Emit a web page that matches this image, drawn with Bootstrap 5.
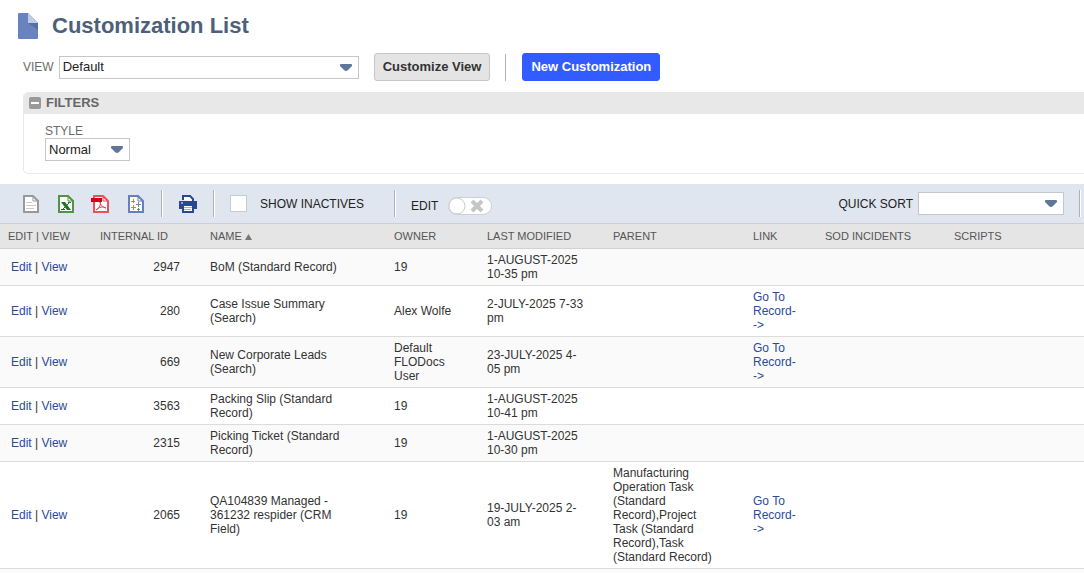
<!DOCTYPE html>
<html lang="en">
<head>
<meta charset="utf-8">
<meta name="viewport" content="width=device-width, initial-scale=1">
<title>Customization List</title>
<link href="https://cdn.jsdelivr.net/npm/bootstrap@5.3.0/dist/css/bootstrap.min.css" rel="stylesheet">
<style>
  body { font-family: "Liberation Sans", Arial, sans-serif; font-size: 12px; line-height: 14px; color: #333; background: #fff; }
  a { color: #2b4b96; text-decoration: none; }
  a:hover { text-decoration: underline; }
  .page-heading { padding: 11px 18px 0 17px; gap: 13px; }
  .page-heading h1 { font-size: 22px; line-height: 30px; font-weight: 700; color: #4d5f79; }
  .view-bar { padding: 12px 23px 0; gap: 15px; }
  .view-field { gap: 5px; }
  .field-label { color: #6b6b6b; }
  .ns-select { appearance: none; border: 1px solid #c4c7cb; border-radius: 0; height: 23px; padding: 0 24px 0 3px; font-size: 13px; line-height: 20px; color: #222;
    background: #fff url("data:image/svg+xml,%3Csvg xmlns='http://www.w3.org/2000/svg' width='12' height='7'%3E%3Cpath d='M1 0h10q1 0 1 1v1L8 6q-2 2-4 0L0 2V1q0-1 1-1z' fill='%23607799'/%3E%3C/svg%3E") no-repeat right 6px center; }
  .select-view { width: 300px; }
  .select-style { width: 85px; }
  .select-sort { width: 146px; }
  .ns-btn { height: 28px; padding: 0 8px; border-radius: 3px; font-size: 13px; line-height: 24px; font-weight: 700; }
  .ns-btn-gray, .ns-btn-gray:hover { background: #e4e4e4; border: 1px solid #c6c6c6; color: #333; }
  .ns-btn-blue, .ns-btn-blue:hover { background: #325cff; border: 1px solid #325cff; color: #fff; }
  .divider { width: 2px; height: 27px; background: #a9b1bd; border-right: 1px solid #fff; }
  .filters { margin: 11px 0 10px 23px; border: 1px solid #e8e8e8; border-width: 0 0 1px 1px; border-radius: 5px 0 0 5px; }
  .filters-head { height: 22px; background: #e8e8e8; border-radius: 5px 0 0 0; padding: 0 5px; font-size: 13px; font-weight: 700; color: #666; gap: 5px; }
  .filters-body { padding: 10px 21px 12px; }
  .toolbar-row { background: #e0e6ef; height: 40px; border-bottom: 1px solid #ccd0d6; color: #222; gap: 15px; padding: 0 3px 0 21px; }
  .tool-btn { border: 0; background: none; padding: 0; width: 20px; height: 20px; }
  .tool-icons { gap: 15px; }
  .inactive-field { gap: 13px; padding-right: 15px; }
  .edit-field { gap: 10px; }
  .sort-field { gap: 5px; }
  .check-box { appearance: none; width: 17px; height: 17px; margin: 0; background: #fff; border: 1px solid #c6cbd2; }
  .check-box:checked { background: #607799; }
  .edit-switch { position: relative; width: 44px; height: 18px; border-radius: 9px; background: #fff; border: 1px solid #ccd0d6; }
  .edit-switch input { position: absolute; inset: 0; width: 100%; height: 100%; margin: 0; opacity: 0; }
  .list-grid { width: 100%; table-layout: fixed; margin: 0; }
  .list-grid th { height: 24px; line-height: 12px; padding: 0 0 0 8px; background: #e5e5e5; border-bottom: 1px solid #d2d2d2; font-size: 11px; font-weight: 400; color: #555; white-space: nowrap; vertical-align: middle; }
  .list-grid td { padding: 4px 20px 4px 8px; border-bottom: 1px solid #dcdcdc; vertical-align: middle; }
  .list-grid td:first-child { padding: 4px 0 4px 11px; }
  .list-grid td:nth-child(2) { padding-right: 22px; }
  .list-grid td:nth-child(3) { padding-right: 42px; }
  .list-grid td:nth-child(6) { padding-right: 30px; }
  .list-grid tbody tr:nth-child(odd) { background: #fafafa; }
  .c-edit { width: 92px; } .c-id { width: 110px; } .c-name { width: 184px; } .c-owner { width: 93px; }
  .c-date { width: 126px; } .c-parent { width: 140px; } .c-link { width: 72px; } .c-sod { width: 129px; }
  .list-rest { background: #fafafa; }
</style>
</head>
<body class="d-flex flex-column min-vh-100">
<header>
  <div class="page-heading d-flex align-items-center">
    <svg width="22" height="28" viewBox="0 0 22 28" aria-hidden="true"><path d="M2 1h9l10 10v15q0 1-1 1H2q-1 0-1-1V2q0-1 1-1z" fill="#6883bd"/><path d="M11 11h10v7z" fill="#566fa8"/><path d="M11 1l10 10H11z" fill="#c0cbe4"/></svg>
    <h1 class="m-0">Customization List</h1>
  </div>
  <div class="view-bar d-flex align-items-center">
    <div class="view-field d-flex align-items-center">
      <label class="field-label" for="view">VIEW</label>
      <select class="ns-select select-view" id="view"><option>Default</option></select>
    </div>
    <button type="button" class="btn ns-btn ns-btn-gray">Customize View</button>
    <span class="divider"></span>
    <button type="button" class="btn ns-btn ns-btn-blue">New Customization</button>
  </div>
</header>
<section class="filters">
  <div class="filters-head d-flex align-items-center">
    <svg width="12" height="12" aria-hidden="true"><rect width="12" height="12" rx="2" fill="#999"/><path d="M2 6h8" stroke="#fff" stroke-width="2"/></svg>
    <span>FILTERS</span>
  </div>
  <div class="filters-body">
    <label class="field-label d-block" for="style">STYLE</label>
    <select class="ns-select select-style" id="style"><option>Normal</option></select>
  </div>
</section>
<main class="flex-grow-1 d-flex flex-column">
  <div class="toolbar-row d-flex align-items-center">
    <div class="tool-icons d-flex">
      <button class="tool-btn" type="button" aria-label="Export CSV"><svg class="d-block" width="20" height="20"><path d="M3 2h9l5 5v11H3z" fill="#fff" stroke="#999" stroke-width="2"/><path d="M12 2v5h5" fill="none" stroke="#999"/><path d="M5 8.500h6M5 11.500h10M5 14.500h8" stroke="#ccc"/></svg></button>
      <button class="tool-btn" type="button" aria-label="Export Excel"><svg class="d-block" width="20" height="20"><path d="M3 2h9l5 5v11H3z" fill="#fff" stroke="#519443" stroke-width="2"/><path d="M12 2v5h5" fill="none" stroke="#519443"/><path d="M5 8h4l6 8h-4z" fill="#22702b"/><path d="M14 8L6 16M12 8.500h3M5 15.500h4" stroke="#22702b"/></svg></button>
      <button class="tool-btn" type="button" aria-label="Export PDF"><svg class="d-block" width="20" height="20"><path d="M3 2h9l5 5v11H3z" fill="#fff" stroke="#e8525a" stroke-width="2"/><path d="M12 2v5h5" fill="none" stroke="#e8525a"/><path d="M0 4h11v4H0z" fill="#d5001c"/><path d="M9 8c1 4 3 5 6 6-4-2-6-1-10 2 4-3 5-5 4-8z" fill="none" stroke="#e0444d"/></svg></button>
      <button class="tool-btn" type="button" aria-label="Export data"><svg class="d-block" width="20" height="20"><path d="M3 2h9l5 5v11H3z" fill="#fff" stroke="#6680bb" stroke-width="2"/><path d="M12 2v5h5" fill="none" stroke="#6680bb"/><path d="M5 7.500h4M7.500 5v4M5 13.500h5M7.500 11v5" stroke="#c98b4b"/><path d="M10 10.500h5M12.500 8v5M11 15.500h3M12.500 14v3" stroke="#6f83ad"/></svg></button>
    </div>
    <span class="divider"></span>
    <button class="tool-btn" type="button" aria-label="Print"><svg class="d-block" width="20" height="20"><path d="M1 7h18v8H1z" fill="#28498d"/><path d="M5 6V2h7l3 3v2" fill="#fff" stroke="#28498d" stroke-width="2"/><path d="M5 11h10v7H5z" fill="#fff" stroke="#28498d" stroke-width="2"/><path d="M6 13.500h8M6 15.500h7" stroke="#9badd0"/><path d="M3 9h2" stroke="#fff"/></svg></button>
    <span class="divider"></span>
    <div class="inactive-field d-flex align-items-center">
      <input class="check-box" type="checkbox" id="inactive">
      <label for="inactive">SHOW INACTIVES</label>
    </div>
    <span class="divider"></span>
    <div class="edit-field d-flex align-items-center pt-1">
      <label for="edit">EDIT</label>
      <span class="edit-switch"><input type="checkbox" role="switch" id="edit"><svg class="d-block" width="42" height="16"><circle cx="8" cy="8" r="8" fill="#fff" stroke="#ccc"/><path d="M23 3l10 10M33 3L23 13" stroke="#c5c5c5" stroke-width="4"/></svg></span>
    </div>
    <div class="sort-field d-flex align-items-center ms-auto">
      <label for="sort">QUICK SORT</label>
      <select class="ns-select select-sort" id="sort"><option></option></select>
    </div>
    <span class="divider"></span>
  </div>
  <table class="list-grid">
    <colgroup><col class="c-edit"><col class="c-id"><col class="c-name"><col class="c-owner"><col class="c-date"><col class="c-parent"><col class="c-link"><col class="c-sod"><col></colgroup>
    <thead><tr><th>EDIT | VIEW</th><th>INTERNAL ID</th><th>NAME <svg width="7" height="6" aria-hidden="true"><path d="M0 6l3.500-6L7 6z" fill="#777"/></svg></th><th>OWNER</th><th>LAST MODIFIED</th><th>PARENT</th><th>LINK</th><th>SOD INCIDENTS</th><th>SCRIPTS</th></tr></thead>
    <tbody>
      <tr><td><a href="#">Edit</a> | <a href="#">View</a></td><td class="text-end">2947</td><td>BoM (Standard Record)</td><td>19</td><td>1-AUGUST-2025 10-35 pm</td><td></td><td></td><td></td><td></td></tr>
      <tr><td><a href="#">Edit</a> | <a href="#">View</a></td><td class="text-end">280</td><td>Case Issue Summary (Search)</td><td>Alex Wolfe</td><td>2-JULY-2025 7-33 pm</td><td></td><td><a href="#">Go To Record-<wbr>-&gt;</a></td><td></td><td></td></tr>
      <tr><td><a href="#">Edit</a> | <a href="#">View</a></td><td class="text-end">669</td><td>New Corporate Leads (Search)</td><td>Default FLODocs User</td><td>23-JULY-2025 4-05 pm</td><td></td><td><a href="#">Go To Record-<wbr>-&gt;</a></td><td></td><td></td></tr>
      <tr><td><a href="#">Edit</a> | <a href="#">View</a></td><td class="text-end">3563</td><td>Packing Slip (Standard Record)</td><td>19</td><td>1-AUGUST-2025 10-41 pm</td><td></td><td></td><td></td><td></td></tr>
      <tr><td><a href="#">Edit</a> | <a href="#">View</a></td><td class="text-end">2315</td><td>Picking Ticket (Standard Record)</td><td>19</td><td>1-AUGUST-2025 10-30 pm</td><td></td><td></td><td></td><td></td></tr>
      <tr><td><a href="#">Edit</a> | <a href="#">View</a></td><td class="text-end">2065</td><td>QA104839 Managed - 361232 respider (CRM Field)</td><td>19</td><td>19-JULY-2025 2-03 am</td><td>Manufacturing Operation Task (Standard Record),Project Task (Standard Record),Task (Standard Record)</td><td><a href="#">Go To Record-<wbr>-&gt;</a></td><td></td><td></td></tr>
    </tbody>
  </table>
  <div class="list-rest flex-grow-1"></div>
</main>
<script src="https://cdn.jsdelivr.net/npm/bootstrap@5.3.0/dist/js/bootstrap.bundle.min.js"></script>
</body>
</html>
